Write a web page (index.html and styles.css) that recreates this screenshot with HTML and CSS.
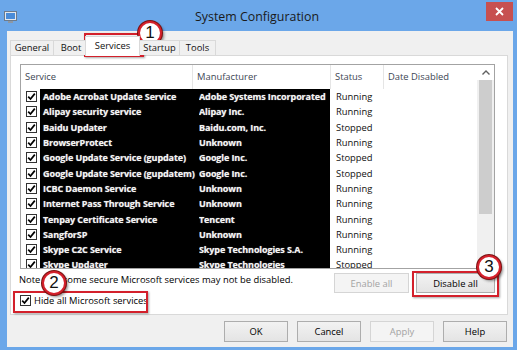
FILE: index.html
```html
<!DOCTYPE html>
<html lang="en">
<head>
    <meta charset="UTF-8">
    <title>System Configuration</title>
    <link rel="stylesheet" href="styles.css">
</head>
<body>
    <div class="window">
        <div class="titlebar">
            <svg class="app-icon" width="13" height="13" viewBox="0 0 13 13">
                <rect x="0.5" y="0.5" width="12" height="9" fill="#e4e9ef" stroke="#6d7b8b"/>
                <rect x="2" y="2" width="9" height="6" fill="#4a8cd8"/>
                <rect x="4" y="10" width="5" height="2" fill="#8d98a5"/>
            </svg>
            <span class="title">System Configuration</span>
            <div class="close-btn">
                <svg width="9" height="9" viewBox="0 0 9 9"><path d="M1 1 L8 8 M8 1 L1 8" stroke="#fff" stroke-width="1.8"/></svg>
            </div>
        </div>
        <div class="client">
            <div class="tabs">
                <div class="tab tab-general">General</div>
                <div class="tab tab-boot">Boot</div>
                <div class="tab tab-services active">Services</div>
                <div class="tab tab-startup">Startup</div>
                <div class="tab tab-tools">Tools</div>
            </div>
            <div class="panel">
                <div class="list">
                    <div class="list-main">
                        <div class="list-header">
                            <div class="col">Service</div>
                            <div class="col">Manufacturer</div>
                            <div class="col">Status</div>
                            <div class="col">Date Disabled</div>
                        </div>
                        <div class="rows" id="rows"></div>
                    </div>
                    <div class="scrollbar">
                        <div class="scroll-up">
                            <svg width="8" height="5" viewBox="0 0 8 5"><path d="M0.5 4.5 L4 1 L7.5 4.5" fill="none" stroke="#606060" stroke-width="1.4"/></svg>
                        </div>
                        <div class="scroll-thumb"></div>
                    </div>
                </div>
                <div class="note-row">
                    <span class="note">Note that some secure Microsoft services may not be disabled.</span>
                    <div class="list-buttons">
                        <button class="btn btn-enable" disabled>Enable all</button>
                        <button class="btn btn-disable">Disable all</button>
                    </div>
                </div>
                <label class="hide-row">
                    <span class="checkbox">
                        <svg width="9" height="9" viewBox="0 0 9 9"><path d="M1.2 4.6 L3.5 7 L7.8 1.6" fill="none" stroke="#000" stroke-width="1.7"/></svg>
                    </span>
                    Hide all Microsoft services
                </label>
            </div>
            <div class="footer">
                <button class="btn">OK</button>
                <button class="btn">Cancel</button>
                <button class="btn" disabled>Apply</button>
                <button class="btn">Help</button>
            </div>
        </div>

        <!-- annotations -->
        <div class="mark mark-tab"></div>
        <div class="mark mark-hide"></div>
        <div class="mark mark-disable"></div>
        <div class="callout callout-1">1</div>
        <div class="callout callout-2">2</div>
        <div class="callout callout-3">3</div>
    </div>
    <script>
        const services = [
            ["Adobe Acrobat Update Service", "Adobe Systems Incorporated", "Running"],
            ["Alipay security service", "Alipay Inc.", "Running"],
            ["Baidu Updater", "Baidu.com, Inc.", "Stopped"],
            ["BrowserProtect", "Unknown", "Running"],
            ["Google Update Service (gupdate)", "Google Inc.", "Stopped"],
            ["Google Update Service (gupdatem)", "Google Inc.", "Stopped"],
            ["ICBC Daemon Service", "Unknown", "Running"],
            ["Internet Pass Through Service", "Unknown", "Running"],
            ["Tenpay Certificate Service", "Tencent", "Running"],
            ["SangforSP", "Unknown", "Running"],
            ["Skype C2C Service", "Skype Technologies S.A.", "Running"],
            ["Skype Updater", "Skype Technologies", "Stopped"]
        ];

        const check = '<svg width="9" height="9" viewBox="0 0 9 9"><path d="M1.2 4.6 L3.5 7 L7.8 1.6" fill="none" stroke="#000" stroke-width="1.7"/></svg>';
        const rows = document.getElementById("rows");
        services.forEach(([name, maker, status]) => {
            const row = document.createElement("div");
            row.className = "row";
            row.innerHTML =
                `<div class="cb-cell"><span class="checkbox">${check}</span></div>` +
                `<div class="redact"><span class="svc">${name}</span><span class="mfr">${maker}</span></div>` +
                `<div class="status">${status}</div>`;
            rows.appendChild(row);
        });
    </script>
</body>
</html>
```

FILE: styles.css
```css
body {
    margin: 0;
    background: #fff;
    font-family: "Open Sans", "Noto Sans", sans-serif;
    font-size: 9.4px;
    color: #000;
}
.window {
    position: relative;
    width: 517px;
    height: 350px;
    box-sizing: border-box;
    background: #6ba7e9;
    padding: 0 4px 3px 7px;
    display: flex;
    flex-direction: column;
}
.titlebar {
    height: 31px;
    margin: 0 -4px 0 -7px;
    display: grid;
    grid-template-columns: 1fr auto 1fr;
    align-items: center;
}
.app-icon {
    margin-left: 4px;
    margin-top: 3px;
}
.title {
    font-size: 12.4px;
    color: #1a1a1a;
    padding-top: 2px;
    padding-right: 3px;
}
.close-btn {
    justify-self: end;
    align-self: start;
    margin: 2px 4px 0 0;
    width: 27px;
    height: 19px;
    background: #c75050;
    display: flex;
    align-items: center;
    justify-content: center;
}
.client {
    flex: 1;
    background: #f0f0f0;
    padding: 5px 5px 0 3px;
    display: flex;
    flex-direction: column;
}

/* tabs */
.tabs {
    height: 19px;
    display: flex;
    align-items: flex-end;
    position: relative;
    z-index: 1;
}
.tab {
    box-sizing: border-box;
    height: 15px;
    line-height: 14px;
    text-align: center;
    background: #f0f0f0;
    border: 1px solid #d9d9d9;
    border-bottom: none;
    margin-right: -1px;
    color: #111;
}
.tab-general { width: 44px; }
.tab-boot { width: 36px; }
.tab-services { width: 55px; }
.tab-startup { width: 41px; }
.tab-tools { width: 37px; }
.tab.active {
    height: 20px;
    line-height: 18px;
    background: #fff;
    margin: 0 -1px -1px -3px;
    position: relative;
}
.tab.active + .tab {
    margin-left: 0;
}
.panel {
    box-sizing: border-box;
    height: 260px;
    background: #fff;
    border: 1px solid #d9d9d9;
    padding: 8px 12px 0 9px;
}

/* list view */
.list {
    box-sizing: border-box;
    height: 205px;
    border: 1px solid #a3a3a3;
    display: flex;
    overflow: hidden;
}
.list-main {
    flex: 1;
    overflow: hidden;
}
.list-header {
    height: 24px;
    display: grid;
    grid-template-columns: 172px 138px 53px 1fr;
}
.list-header .col {
    line-height: 24px;
    padding-left: 4px;
    border-right: 1px solid #e5e5e5;
    color: #3d4654;
}
.list-header .col:last-child {
    border-right: none;
}
.row {
    height: 15.3px;
    display: flex;
    align-items: center;
}
.cb-cell {
    width: 19px;
    height: 100%;
    display: flex;
    align-items: center;
    padding-left: 5px;
    box-sizing: border-box;
}
.checkbox {
    box-sizing: border-box;
    width: 11px;
    height: 11px;
    border: 1px solid #333;
    background: #fff;
    display: inline-flex;
    align-items: center;
    justify-content: center;
    flex-shrink: 0;
}
.redact {
    width: 290px;
    height: 100%;
    background: #000;
    color: #f4f4f4;
    display: flex;
    align-items: center;
    font-weight: 700;
    font-size: 9px;
    letter-spacing: -0.1px;
    text-shadow: 0 0 1px rgba(255, 255, 255, 0.6);
    white-space: nowrap;
    overflow: hidden;
}
.svc {
    width: 159px;
    padding-left: 3px;
    box-sizing: border-box;
    overflow: hidden;
}
.mfr {
    flex: 1;
    overflow: hidden;
}
.status {
    padding-left: 6px;
    color: #111;
}
.scrollbar {
    width: 17px;
    background: #f0f0f0;
    display: flex;
    flex-direction: column;
    align-items: center;
}
.scroll-up {
    height: 15px;
    width: 100%;
    display: flex;
    align-items: center;
    justify-content: center;
    background: #fff;
}
.scroll-thumb {
    width: 13px;
    height: 134px;
    background: #cdcdcd;
}

/* below the list */
.note-row {
    display: flex;
    justify-content: space-between;
    align-items: flex-start;
    margin-top: 4px;
    height: 20px;
}
.note {
    line-height: 14px;
    margin-left: -1px;
}
.list-buttons {
    display: flex;
    gap: 7px;
}
.btn {
    box-sizing: border-box;
    height: 21px;
    padding: 0;
    font-family: inherit;
    font-size: 9.4px;
    color: #000;
    background: linear-gradient(#f2f2f2, #e4e4e4);
    border: 1px solid #adadad;
}
.btn:disabled {
    color: #a3a3a3;
    background: #f4f4f4;
    border-color: #d5d5d5;
}
.btn-enable { width: 75px; height: 20px; }
.btn-disable { width: 79px; height: 20px; }
.hide-row {
    display: flex;
    align-items: center;
    gap: 3px;
    height: 14px;
}
.footer {
    display: flex;
    justify-content: flex-end;
    gap: 9px;
    margin-top: 6px;
    padding-right: 1px;
}
.footer .btn {
    width: 64px;
}

/* annotations */
.mark {
    position: absolute;
    box-sizing: border-box;
    border: 2px solid #d3202b;
    box-shadow: 1px 1px 2px rgba(0, 0, 0, 0.35);
}
.mark-tab { left: 84px; top: 33px; width: 60px; height: 24px; }
.mark-hide { left: 13px; top: 291px; width: 135px; height: 22px; }
.mark-disable { left: 412px; top: 271px; width: 87px; height: 26px; }
.callout {
    position: absolute;
    box-sizing: border-box;
    width: 24px;
    height: 24px;
    border-radius: 50%;
    background: #fff;
    border: 2px solid #d3202b;
    box-shadow: 0 0 0 1px #7a1010, 2px 2px 3px rgba(0, 0, 0, 0.45);
    font-family: "Liberation Sans", Arial, sans-serif;
    font-size: 17px;
    line-height: 20px;
    text-align: center;
    color: #111;
}
.callout-1 { left: 138px; top: 21px; }
.callout-2 { left: 42px; top: 271px; }
.callout-3 { left: 477px; top: 255px; }
```
